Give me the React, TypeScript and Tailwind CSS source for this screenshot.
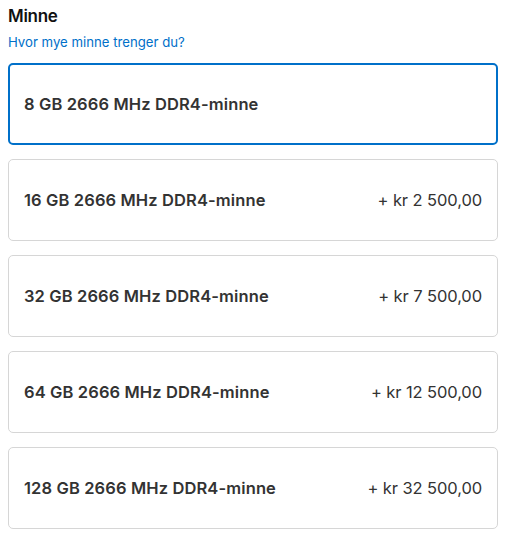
import React from "react";

const options = [
  { label: "8 GB 2666 MHz DDR4-minne", price: "", selected: true },
  { label: "16 GB 2666 MHz DDR4-minne", price: "+ kr 2 500,00" },
  { label: "32 GB 2666 MHz DDR4-minne", price: "+ kr 7 500,00" },
  { label: "64 GB 2666 MHz DDR4-minne", price: "+ kr 12 500,00" },
  { label: "128 GB 2666 MHz DDR4-minne", price: "+ kr 32 500,00" },
];

export default function App() {
  return (
    <div className="w-[506px] h-[545px] bg-white px-2 pt-[5px] text-[#333]" style={{ fontFamily: "Inter, 'Liberation Sans', sans-serif" }}>
      <h2 className="text-[17px] leading-[22px] font-semibold text-[#111] tracking-[-0.3px]">Minne</h2>
      <a className="block mt-[7px] text-[13.2px] leading-[16px] text-[#0070c9]">Hvor mye minne trenger du?</a>
      <div className="mt-[13px] flex flex-col gap-[14px] w-[490px]">
        {options.map((o) => (
          <div
            key={o.label}
            className={
              o.selected
                ? "h-[82px] rounded-[5px] border-2 border-[#0070c9] flex items-center justify-between px-[14px]"
                : "h-[82px] rounded-[5px] border border-[#d6d6d6] flex items-center justify-between px-[15px]"
            }
          >
            <span className="text-[16.5px] font-semibold text-[#333] tracking-[0.12px]">{o.label}</span>
            <span className="text-[16.5px] text-[#333] tracking-[-0.1px]">{o.price}</span>
          </div>
        ))}
      </div>
    </div>
  );
}
